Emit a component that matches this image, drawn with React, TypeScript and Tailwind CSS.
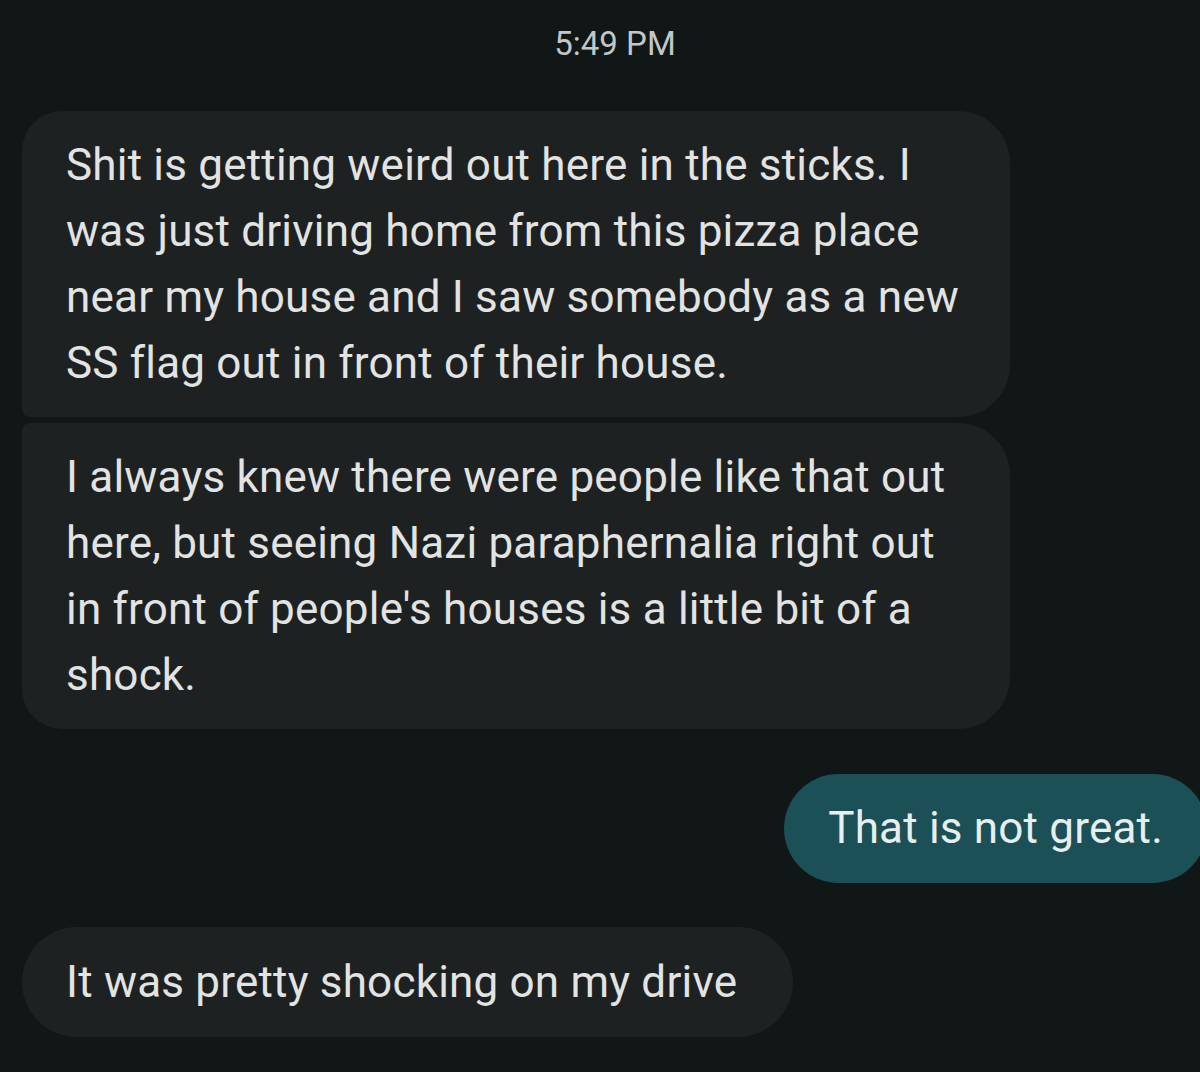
import React from 'react';

const font = { fontFamily: 'Roboto, "Noto Sans", sans-serif' };

function Incoming({ lines, shape }: { lines: string[]; shape: string }) {
  return (
    <div className={`bg-[#1e2122] text-[#e2e3e3] pl-[44px] pr-[45px] py-[21px] text-[44px] leading-[66px] tracking-[0.2px] ${shape}`}>
      {lines.map((l, i) => (
        <div key={i} className="whitespace-nowrap">{l}</div>
      ))}
    </div>
  );
}

export default function App() {
  return (
    <div className="w-[1200px] h-[1072px] bg-[#111617] overflow-hidden" style={font}>
      <div className="pt-[24px] text-center text-[33px] leading-[40px] text-[#c4c7c7] pl-[30px]">5:49 PM</div>

      <div className="mt-[47px] pl-[22px] flex flex-col gap-[6px]">
        <div className="w-[988px]">
          <Incoming
            shape="rounded-tl-[40px] rounded-tr-[52px] rounded-br-[52px] rounded-bl-[8px]"
            lines={[
              'Shit is getting weird out here in the sticks. I',
              'was just driving home from this pizza place',
              'near my house and I saw somebody as a new',
              'SS flag out in front of their house.',
            ]}
          />
        </div>
        <div className="w-[988px]">
          <Incoming
            shape="rounded-tl-[8px] rounded-tr-[52px] rounded-br-[52px] rounded-bl-[40px]"
            lines={[
              'I always knew there were people like that out',
              "here, but seeing Nazi paraphernalia right out",
              "in front of people's houses is a little bit of a",
              'shock.',
            ]}
          />
        </div>
      </div>

      <div className="mt-[45px] flex justify-end mr-[-7px]">
        <div className="bg-[#1b5056] text-[#e6eeee] rounded-full px-[44px] py-[21px] text-[44px] leading-[67px] tracking-[0.2px] whitespace-nowrap">
          That is not great.
        </div>
      </div>

      <div className="mt-[44px] pl-[22px] flex">
        <div className="bg-[#1e2122] text-[#e2e3e3] rounded-full pl-[44px] pr-[56px] py-[22px] text-[44px] leading-[66px] tracking-[0.2px] whitespace-nowrap">
          It was pretty shocking on my drive
        </div>
      </div>
    </div>
  );
}
